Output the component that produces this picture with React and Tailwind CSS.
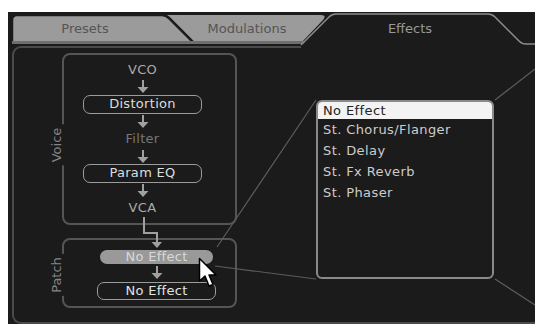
import React from 'react';

function Arrow({ h, top }) {
  // small down arrow: stem + triangular head
  return (
    <svg width="12" height={h} className="block shrink-0">
      <line x1="6" y1={top} x2="6" y2={top + 8} stroke="#a0a0a0" strokeWidth="2" />
      <polygon points={`0.5,${top + 7} 11.5,${top + 7} 6,${top + 13}`} fill="#a0a0a0" />
    </svg>
  );
}

function SideLabel({ text, top }) {
  return (
    <div
      className="absolute left-[-7px] -translate-x-1/2 -translate-y-1/2 -rotate-90 bg-[#1b1b1b] px-[3px] text-[13px] leading-[14px] text-[#858585]"
      style={{ top }}
    >
      {text}
    </div>
  );
}

function App() {
  const effects = ['St. Chorus/Flanger', 'St. Delay', 'St. Fx Reverb', 'St. Phaser'];

  return (
    <div className="relative w-[535px] h-[324px] bg-white pt-[12px] pl-[8px] overflow-hidden font-['DejaVu_Sans',sans-serif]">
      {/* tab shapes */}
      <svg className="absolute left-0 top-0 z-10 pointer-events-none" width="535" height="52">
        <path d="M160 44 L160 15 L321 15 Q327 15 323 20 L303 41 Q300 44 296 44 Z" fill="#9b9b9b" />
        <path
          d="M12 44 L12 20 Q12 15 17 15 L162 15 Q166 15 169 18 L195 44 Z"
          fill="#9b9b9b"
          stroke="#1b1b1b"
          strokeWidth="2.5"
        />
        <rect x="12" y="41" width="293" height="3" fill="#6e6e6e" />
        <path
          d="M301 46 L329 17 Q332 14 336 14 L488 14 Q492 14 495 17 L519 41 Q522 44 526 44 L535 44 L535 50 L301 50 Z"
          fill="#1b1b1b"
        />
        <path
          d="M301 45 L329 17 Q332 14 336 14 L488 14 Q492 14 495 17 L519 41 Q522 44 526 44 L535 44"
          fill="none"
          stroke="#8c8c8c"
          strokeWidth="1.5"
        />
      </svg>

      {/* zoom lines */}
      <svg className="absolute left-0 top-0 z-30 pointer-events-none" width="535" height="324">
        <g stroke="#5c5c5c" strokeWidth="1.2">
          <line x1="217" y1="247" x2="316" y2="100" />
          <line x1="215" y1="266" x2="316" y2="279" />
          <line x1="495" y1="100" x2="535" y2="69" />
          <line x1="495" y1="279" x2="535" y2="305" />
        </g>
      </svg>

      {/* cursor */}
      <svg className="absolute left-[198px] top-[257px] z-40" width="22" height="34" viewBox="0 0 22 34">
        <path
          d="M1.5 1.5 L1.5 24 L7 19 L11 29 L15 27.5 L11 18 L18 18 Z"
          fill="#ffffff"
          stroke="#000000"
          strokeWidth="1.5"
          strokeLinejoin="round"
        />
      </svg>

      <div className="relative h-[312px] w-[527px] bg-[#1b1b1b]">
        {/* tab labels */}
        <div className="relative z-20 h-[34px] flex items-center text-[13px]">
          <div className="ml-[4px] w-[146px] text-center text-[#555555]">Presets</div>
          <div className="w-[178px] text-center text-[#555555]">Modulations</div>
          <div className="w-[148px] text-center text-[#999999]">Effects</div>
        </div>

        {/* panel */}
        <div className="ml-[4px] h-[278px] border-2 border-r-0 border-[#4a4a4a] rounded-l-[9px] flex">
          <div className="relative ml-[48px] mt-[5px] w-[175px] flex flex-col">
            {/* voice */}
            <div className="relative h-[172px] border-2 border-[#555555] rounded-[8px]">
              <SideLabel text="Voice" top={90} />
              <div className="ml-[19px] mt-[7px] w-[119px] flex flex-col items-center text-[13px] tracking-[0.3px]">
                <div className="h-[16px] leading-[16px] text-[#aaaaaa]">VCO</div>
                <Arrow h={17} top={2} />
                <div className="w-full h-[19px] border-[1.5px] border-[#9c9c9c] rounded-[7px] text-center leading-[16px] text-[#dddddd]">
                  Distortion
                </div>
                <Arrow h={16} top={1} />
                <div className="h-[18px] leading-[18px] text-[#777777]">Filter</div>
                <Arrow h={16} top={2} />
                <div className="w-full h-[19px] border-[1.5px] border-[#9c9c9c] rounded-[7px] text-center leading-[16px] text-[#dddddd]">
                  Param EQ
                </div>
                <Arrow h={16} top={1} />
                <div className="h-[18px] leading-[18px] text-[#aaaaaa]">VCA</div>
              </div>
            </div>

            {/* connector voice -> patch */}
            <svg className="absolute left-[78px] top-[162px] z-10" width="22" height="36">
              <path d="M4 2 V18 H17 V28" fill="none" stroke="#a0a0a0" strokeWidth="2" />
              <polygon points="11.5,27 22,27 17,33" fill="#a0a0a0" />
            </svg>

            {/* patch */}
            <div className="relative mt-[13px] h-[70px] border-2 border-[#555555] rounded-[8px]">
              <SideLabel text="Patch" top={35} />
              <div className="ml-[33px] mt-[10px] w-[119px] flex flex-col items-center text-[13px] tracking-[0.3px]">
                <div className="w-[113px] h-[14px] rounded-full bg-[#999999] text-center leading-[14px] text-[#d8d8d8]">
                  No Effect
                </div>
                <Arrow h={18} top={2} />
                <div className="w-full h-[18px] border-[1.5px] border-[#9c9c9c] rounded-[7px] text-center leading-[15px] text-[#e2e2e2]">
                  No Effect
                </div>
              </div>
            </div>
          </div>

          {/* effect list */}
          <div className="ml-[79px] mt-[52px] w-[178px] h-[179px] border-2 border-[#8a8a8a] rounded-[6px] flex flex-col text-[13px] tracking-[0.4px]">
            <div className="h-[17px] bg-[#f3f3f3] rounded-t-[4px] pl-[5px] leading-[17px] text-[#222222]">No Effect</div>
            {effects.map((e) => (
              <div key={e} className="h-[21px] pl-[5px] leading-[21px] text-[#cccccc]">
                {e}
              </div>
            ))}
          </div>
        </div>
      </div>
    </div>
  );
}

export default App;
